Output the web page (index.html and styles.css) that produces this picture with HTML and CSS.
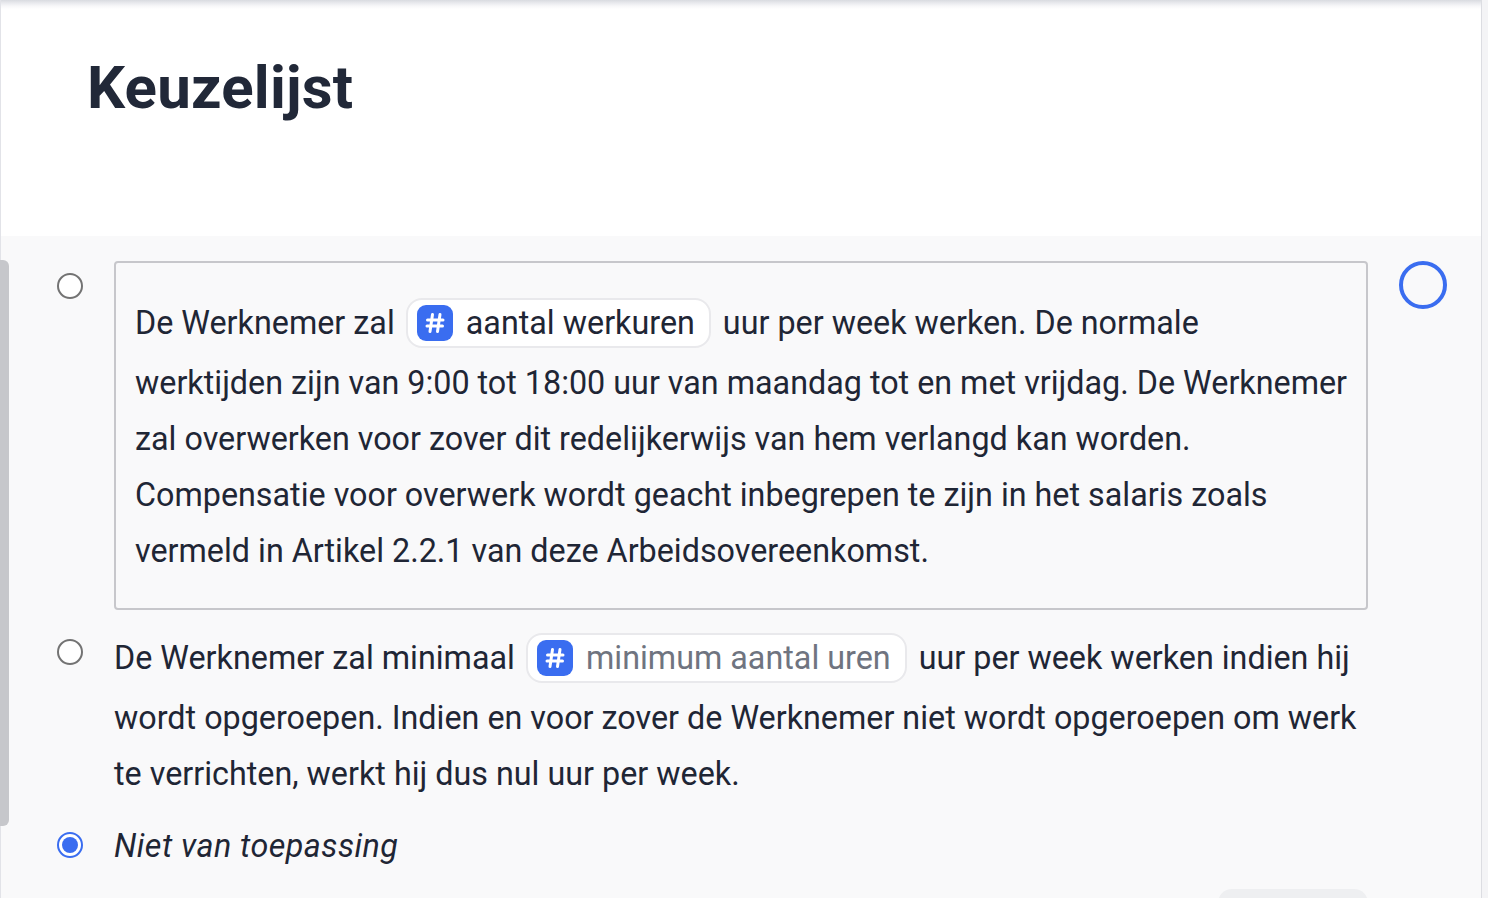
FILE: index.html
```html
<!DOCTYPE html>
<html lang="nl">
<head>
<meta charset="utf-8">
<title>Keuzelijst</title>
<link rel="stylesheet" href="styles.css">
</head>
<body>
<div class="page">
  <header class="header">
    <h1 class="title">Keuzelijst</h1>
  </header>
  <section class="body">
    <div class="options">
      <span class="radio r1"></span>
      <div class="clause-box">
        <p class="clause">De Werknemer zal <span class="chip"><span class="chip-icon"><svg viewBox="0 0 36 36" width="36" height="36"><path d="M15.5 9.5 L13 26.5 M23 9.5 L20.5 26.5 M10.5 15 H26 M10 21 H25.5" stroke="#fff" stroke-width="3" stroke-linecap="round" fill="none"/></svg></span><span class="chip-text">aantal werkuren</span></span> uur per week werken. De normale werktijden zijn van 9:00 tot 18:00 uur van maandag tot en met vrijdag. De Werknemer zal overwerken voor zover dit redelijkerwijs van hem verlangd kan worden. Compensatie voor overwerk wordt geacht inbegrepen te zijn in het salaris zoals vermeld in Artikel 2.2.1 van deze Arbeidsovereenkomst.</p>
      </div>
      <span class="ring"></span>

      <span class="radio r2"></span>
      <p class="clause plain second">De Werknemer zal minimaal <span class="chip"><span class="chip-icon"><svg viewBox="0 0 36 36" width="36" height="36"><path d="M15.5 9.5 L13 26.5 M23 9.5 L20.5 26.5 M10.5 15 H26 M10 21 H25.5" stroke="#fff" stroke-width="3" stroke-linecap="round" fill="none"/></svg></span><span class="chip-text placeholder">minimum aantal uren</span></span> uur per week werken indien hij wordt opgeroepen. Indien en voor zover de Werknemer niet wordt opgeroepen om werk te verrichten, werkt hij dus nul uur per week.</p>
      <span></span>

      <span class="radio checked r3"></span>
      <p class="clause plain na">Niet van toepassing</p>
      <span></span>

      <span></span>
      <div class="actions"><span class="ghost-btn"></span></div>
      <span></span>
    </div>
  </section>
</div>
</body>
</html>
```
FILE: styles.css
```css
* { box-sizing: border-box; }
html, body { margin: 0; padding: 0; }
body {
  background: #f4f4f6;
  font-family: Roboto, "Liberation Sans", Arial, sans-serif;
  color: #1f2635;
  height: 898px;
  overflow: hidden;
}
.page {
  width: 1482px;
  height: 898px;
  border-left: 1px solid #e2e3e8;
  border-right: 1px solid #dcdde2;
  background: #f9f9fa;
}
.header {
  height: 236px;
  background: linear-gradient(#d9dbe0 0, #e9eaee 3px, #f7f7f9 6px, #ffffff 9px);
  padding: 58px 0 0 86px;
}
.title {
  margin: 0;
  font-size: 60px;
  line-height: 60px;
  font-weight: 700;
  color: #212838;
  letter-spacing: 0.2px;
}
.body {
  position: relative;
  padding: 25px 0 0 56px;
}
.body::before {
  content: "";
  position: absolute;
  left: -1px;
  top: 24px;
  width: 9px;
  height: 566px;
  background: #c6c7cb;
  border-radius: 0 6px 6px 0;
}
.options {
  display: grid;
  grid-template-columns: 26px 1254px 48px;
  column-gap: 31px;
  row-gap: 16px;
  align-items: start;
}
.radio {
  width: 26px;
  height: 26px;
  border: 2px solid #737373;
  border-radius: 50%;
  background: #fff;
  position: relative;
}
.radio.r1 { margin-top: 12px; }
.radio.r2 { margin-top: 13px; }
.radio.r3 { margin-top: 14px; }
.radio.checked {
  border-color: #3a6df0;
}
.radio.checked::after {
  content: "";
  position: absolute;
  inset: 3px;
  border-radius: 50%;
  background: #3a6df0;
}
.clause-box {
  border: 2px solid #c7c7cb;
  border-radius: 4px;
  padding: 32px 18px 29px 19px;
}
.clause {
  margin: 0;
  font-size: 32.3px;
  line-height: 56px;
}
.clause.second {
  margin-top: 4px;
}
.na {
  font-style: italic;
  letter-spacing: 0.45px;
}
.chip {
  display: inline-block;
  height: 50px;
  line-height: 46px;
  margin: 0 4px 7px 3px;
  padding: 0 14px 0 9px;
  background: #fff;
  border: 2px solid #e9e9ec;
  border-radius: 16px;
  white-space: nowrap;
}
.chip-icon {
  display: inline-block;
  vertical-align: top;
  width: 36px;
  height: 36px;
  margin: 5px 13px 0 0;
  border-radius: 9px;
  background: #3a6df0;
}
.chip-icon svg { display: block; }
.chip-text { color: #1f2635; }
.chip-text.placeholder { color: #6f7480; }
.ring {
  width: 48px;
  height: 48px;
  border: 4px solid #3a6df0;
  border-radius: 50%;
}
.actions {
  display: flex;
  justify-content: flex-end;
  margin-top: -1px;
}
.ghost-btn {
  width: 150px;
  height: 40px;
  background: #eeeff1;
  border-radius: 14px;
}
```
